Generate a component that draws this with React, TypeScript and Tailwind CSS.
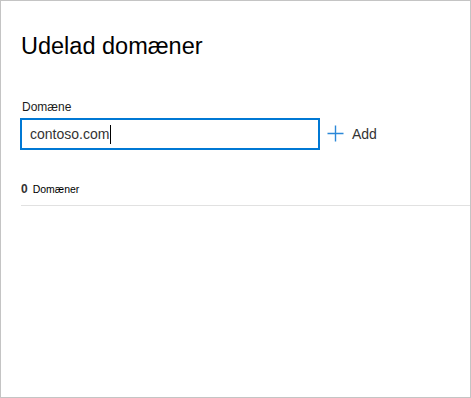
import React from "react";

export default function App() {
  return (
    <div
      className="w-[471px] h-[398px] border border-[#c4c4c4] bg-white flex flex-col pl-[19px]"
      style={{ fontFamily: '"Liberation Sans", Arial, sans-serif' }}
    >
      <h1 className="mt-[28.5px] ml-[1px] text-[23.5px] leading-[32px] text-black font-normal">
        Udelad domæner
      </h1>
      <label className="mt-[37px] ml-[2px] text-[12px] leading-[16px] text-[#1b1b1b]">
        Domæne
      </label>
      <div className="mt-[3px] flex items-center">
        <div className="w-[300px] h-[32px] border-2 border-[#0078d4] flex items-center pl-[8px] pt-[2px] text-[14px] text-[#333333]">
          <span>contoso.com</span>
          <span className="w-px h-[19px] bg-black ml-[0.5px]" />
        </div>
        <button className="ml-[7px] flex items-center text-[14px] text-[#333333]">
          <svg width="17" height="17" viewBox="0 0 17 17" className="block">
            <path d="M8.5 0.5V16.5M0.5 8.5H16.5" stroke="#2b88d8" strokeWidth="1.4" fill="none" />
          </svg>
          <span className="ml-[8px] pt-[1px]">Add</span>
        </button>
      </div>
      <div className="mt-[31px] flex items-baseline">
        <span className="ml-[1px] text-[12px] font-semibold text-[#333333] leading-[16px]">0</span>
        <span className="ml-[5px] text-[10.5px] text-black leading-[16px]">Domæner</span>
      </div>
      <div className="mt-[8px] ml-[1px] border-b border-[#e1e1e1]" />
    </div>
  );
}
